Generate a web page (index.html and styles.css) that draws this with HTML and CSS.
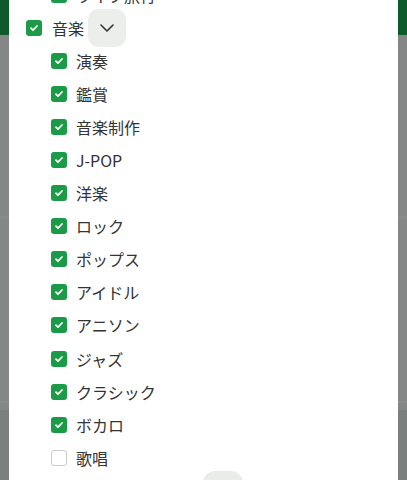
FILE: index.html
```html
<!DOCTYPE html>
<html lang="ja">
<head>
    <meta charset="UTF-8">
    <meta name="viewport" content="width=device-width, initial-scale=1.0">
    <title>ジャンル選択</title>
    <link rel="stylesheet" href="styles.css">
</head>
<body>

    <div class="page">
        <div class="page-header"></div>
        <div class="page-body">
            <div class="page-row"></div>
            <div class="page-row"></div>
        </div>
        <div class="page-footer"></div>
    </div>

    <div class="sheet">
        <ul class="genre-list">
            <li class="row child"><span class="box on"></span><span>ライブ旅行</span></li>
            <li class="row parent">
                <span class="box on"></span><span>音楽</span>
                <button class="toggle" aria-label="閉じる">
                    <svg width="14" height="8" viewBox="0 0 14 8"><path d="M1 1l6 6 6-6" fill="none" stroke="#333" stroke-width="1.6" stroke-linecap="round" stroke-linejoin="round"/></svg>
                </button>
            </li>
            <li class="row child"><span class="box on"></span><span>演奏</span></li>
            <li class="row child"><span class="box on"></span><span>鑑賞</span></li>
            <li class="row child"><span class="box on"></span><span>音楽制作</span></li>
            <li class="row child"><span class="box on"></span><span>J-POP</span></li>
            <li class="row child"><span class="box on"></span><span>洋楽</span></li>
            <li class="row child"><span class="box on"></span><span>ロック</span></li>
            <li class="row child"><span class="box on"></span><span>ポップス</span></li>
            <li class="row child"><span class="box on"></span><span>アイドル</span></li>
            <li class="row child"><span class="box on"></span><span>アニソン</span></li>
            <li class="row child"><span class="box on"></span><span>ジャズ</span></li>
            <li class="row child"><span class="box on"></span><span>クラシック</span></li>
            <li class="row child"><span class="box on"></span><span>ボカロ</span></li>
            <li class="row child"><span class="box"></span><span>歌唱</span></li>
        </ul>
        <button class="float-btn" aria-label="上へ"></button>
    </div>

</body>
</html>
```

FILE: styles.css
```css
html, body { margin: 0; height: 100%; overflow: hidden; }
body { font-family: "Noto Sans CJK JP", "Noto Sans", sans-serif; color: #333; background: #858786; }

/* dimmed page behind the sheet */
.page { height: 100%; display: flex; flex-direction: column; }
.page-header { height: 35px; background: #0e5a2b; }
.page-body { flex: 1; display: flex; flex-direction: column; }
.page-row { height: 183px; border-bottom: 2px solid #8b8d8c; }
.page-row:first-child { height: 181px; }
.page-footer { height: 70px; background: #7b7f7d; }

.sheet { position: absolute; top: 0; bottom: 0; left: 9px; width: 389px; background: #fff; overflow: hidden; }

.genre-list { list-style: none; margin: -22px 0 0; padding: 0; }
.row { display: flex; align-items: center; height: 33.1px; font-size: 16px; }
.parent { padding-left: 17px; }
.child { padding-left: 42px; }
.box { flex-shrink: 0; width: 16px; height: 16px; box-sizing: border-box; border-radius: 3px; margin-right: 9px; border: 1px solid #c9cccb; background: #fff; }
.parent .box { margin-right: 10px; }
.box.on { border: none; background: #1b9a47 url("data:image/svg+xml,%3Csvg xmlns='http://www.w3.org/2000/svg' viewBox='0 0 16 16'%3E%3Cpath d='M5 8.2l2 2 4-4.2' fill='none' stroke='%23fff' stroke-width='1.8' stroke-linecap='round' stroke-linejoin='round'/%3E%3C/svg%3E") center / 16px 16px no-repeat; }

.toggle { flex-shrink: 0; width: 38px; height: 38px; margin-left: 4px; border: none; border-radius: 10px; background: #eceeec; display: flex; align-items: center; justify-content: center; padding: 0; }

.float-btn { position: absolute; left: 194px; bottom: -31px; width: 40px; height: 40px; border: none; border-radius: 12px; background: #e9ece9; }
```
